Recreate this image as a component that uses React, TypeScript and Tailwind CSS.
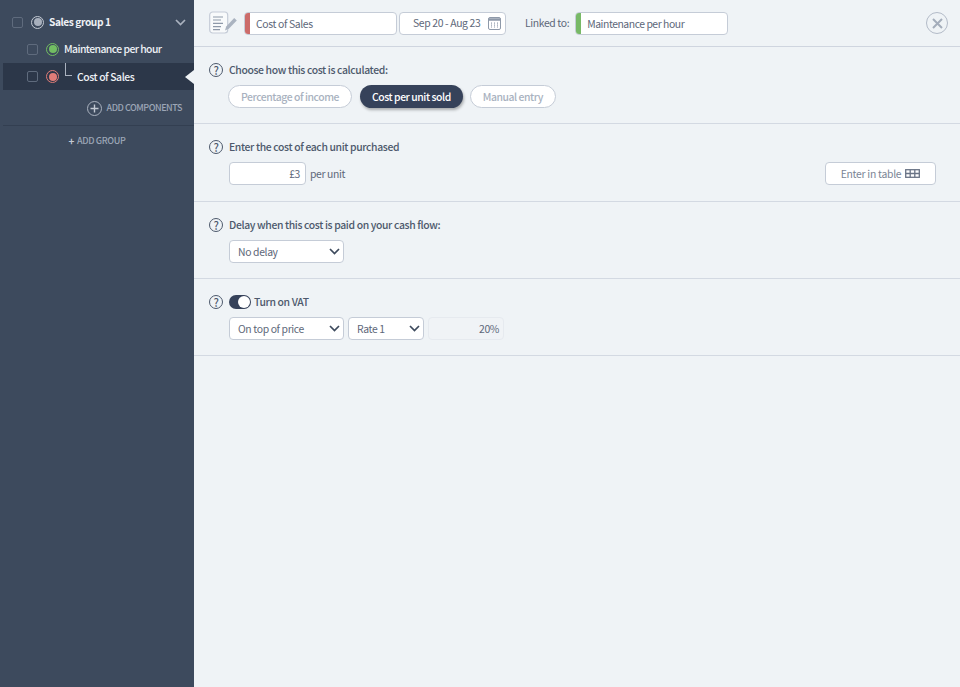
import React from "react";

const font = { fontFamily: '"Noto Sans CJK JP", "Noto Sans", sans-serif' };

function Q() {
  return (
    <span className="flex h-[14px] w-[14px] shrink-0 items-center justify-center rounded-full border-[1.5px] border-[#4d596c] text-[11px] font-medium leading-none text-[#4d596c]">?</span>
  );
}

function Chevron({ className = "" }: { className?: string }) {
  return (
    <svg width="11" height="7" viewBox="0 0 11 7" className={className} fill="none" stroke="currentColor" strokeWidth="1.7">
      <path d="M1 1l4.5 4.5L10 1" />
    </svg>
  );
}

function Select({ label, w }: { label: string; w: string }) {
  return (
    <div className={`flex h-[23px] items-center justify-between rounded-[4px] border border-[#c5ccd7] bg-white pl-2 pr-[3px] text-[10.4px] text-[#5d6779] ${w}`}>
      <span>{label}</span>
      <Chevron className="text-[#3d4a5d]" />
    </div>
  );
}

function Dot({ outer, inner }: { outer: string; inner: string }) {
  return (
    <span className={`flex h-[13px] w-[13px] shrink-0 items-center justify-center rounded-full border-[1.5px] ${outer}`}>
      <span className={`h-[8px] w-[8px] rounded-full ${inner}`} />
    </span>
  );
}

function Box() {
  return <span className="h-[11px] w-[11px] shrink-0 rounded-[2px] border border-[#5f6b7d]" />;
}

function Section({ h, children }: { h: string; children: React.ReactNode }) {
  return <section className={`border-b border-[#d3d9e2] pl-[15px] ${h}`}>{children}</section>;
}

function Label({ children, className = "" }: { children: React.ReactNode; className?: string }) {
  return (
    <div className={`flex h-[14px] items-center gap-[6px] text-[10.4px] font-medium text-[#4d596c] ${className}`}>
      <Q />
      <span>{children}</span>
    </div>
  );
}

function Pill({ children, active }: { children: React.ReactNode; active?: boolean }) {
  return active ? (
    <span className="flex h-[23px] items-center rounded-full bg-[#36425a] px-[12px] text-[10.4px] font-medium tracking-[-0.44px] text-white shadow-[1px_2px_3px_rgba(0,0,0,0.3)]">{children}</span>
  ) : (
    <span className="flex h-[23px] items-center rounded-full border border-[#c5ccd7] bg-white px-[12px] text-[10.4px] font-medium tracking-[-0.44px] text-[#a9b2c0]">{children}</span>
  );
}

export default function App() {
  return (
    <div className="flex h-[687px] w-[960px] overflow-hidden bg-[#eff3f6] tracking-[-0.36px]" style={font}>
      <aside className="flex h-full w-[194px] shrink-0 flex-col bg-[#3d4a5d] pl-[3px] text-white">
        <div className="flex h-[40px] items-center pl-[9px] pr-[8px] pt-[4px]">
          <Box />
          <span className="ml-[8px]"><Dot outer="border-[#c3c9d3]" inner="bg-[#a8b0bd]" /></span>
          <span className="ml-[5px] text-[10.2px] font-bold tracking-[-0.42px] text-[#eef1f5]">Sales group 1</span>
          <Chevron className="ml-auto text-[#aab2bf]" />
        </div>
        <div className="flex h-[23px] items-center pb-[5px] pl-[24px]">
          <Box />
          <span className="ml-[8px]"><Dot outer="border-[#72bd62]" inner="bg-[#72bd62]" /></span>
          <span className="ml-[5px] text-[10.4px] font-medium tracking-[-0.56px] text-[#eef1f5]">Maintenance per hour</span>
        </div>
        <div className="relative flex h-[27px] items-center bg-[#2c3749] pl-[24px]">
          <Box />
          <span className="ml-[8px]"><Dot outer="border-[#e07c78]" inner="bg-[#e07c78]" /></span>
          <span className="relative ml-[18px] text-[10.4px] font-medium tracking-[-0.42px] text-[#eef1f5]">
            Cost of Sales
          </span>
          <span className="absolute left-[62px] top-0 h-[13px] w-[7px] border-b border-l border-[#aab2bf]" />
          <span className="absolute right-0 top-[7px] h-0 w-0 border-y-[7px] border-r-[9px] border-y-transparent border-r-[#eff3f6]" />
        </div>
        <div className="flex h-[36px] items-center justify-end border-b border-[#333f51] pr-[12px] pt-[1px]">
          <span className="flex h-[15px] w-[15px] items-center justify-center rounded-full border border-[#aab2bf] text-[#c2c8d2]">
            <svg width="9" height="9" viewBox="0 0 9 9" stroke="currentColor" strokeWidth="1.4"><path d="M4.5 0.5v8M0.5 4.5h8" /></svg>
          </span>
          <span className="ml-[4px] text-[9px] font-medium tracking-[-0.45px] text-[#9ca6b6]">ADD COMPONENTS</span>
        </div>
        <div className="flex h-[30px] items-center justify-center pr-[3px] text-[9px] font-medium text-[#9ca6b6]">
          <span className="mr-[3px] text-[10px] font-bold leading-none text-[#c2c8d2]">+</span>ADD GROUP
        </div>
      </aside>

      <main className="flex min-w-0 flex-1 flex-col">
        <header className="flex h-[47px] items-center border-b border-[#cfd5df] pl-[15px] pr-[12px]">
          <svg width="29" height="24" viewBox="0 0 29 24" fill="none" className="shrink-0">
            <rect x="0.7" y="1" width="18" height="21" rx="3" fill="#f8fafb" stroke="#c5ccd7" strokeWidth="1.2" />
            <path d="M4 6h10M4 9h8M4 12.3h10M4 15.7h8M4 18.6h7" stroke="#8e99a9" strokeWidth="1.2" />
            <path d="M16 19.5l1.2-4 8-8.5 2.6 2.5-8 8.2z" fill="#aab3c0" />
          </svg>
          <div className="ml-[6px] flex h-[23px] w-[153px] overflow-hidden rounded-[4px] border border-[#c5ccd7] bg-white">
            <span className="w-[5px] shrink-0 bg-[#cc6c6a]" />
            <span className="pl-[6px] text-[10.4px] leading-[21px] text-[#5d6779]">Cost of Sales</span>
          </div>
          <div className="ml-[2px] flex h-[23px] w-[107px] items-center justify-between rounded-[4px] border border-[#c5ccd7] bg-white pl-[13px] pr-[4px] text-[10.4px] text-[#5d6779]">
            <span>Sep 20 - Aug 23</span>
            <svg width="13" height="13" viewBox="0 0 13 13" fill="none" stroke="#8e99a9">
              <rect x="0.5" y="0.5" width="12" height="12" rx="1.5" />
              <path d="M0.5 2.5h12" strokeWidth="2.5" />
              <path d="M3.5 5.5v5M6.5 5.5v5M9.5 5.5v5" strokeDasharray="1.2 0.8" />
            </svg>
          </div>
          <span className="ml-[19px] text-[10.4px] text-[#5d6779]">Linked to:</span>
          <div className="ml-[6px] flex h-[23px] w-[153px] overflow-hidden rounded-[4px] border border-[#c5ccd7] bg-white">
            <span className="w-[5px] shrink-0 bg-[#78b967]" />
            <span className="pl-[6px] text-[10.4px] leading-[21px] tracking-[-0.46px] text-[#5d6779]">Maintenance per hour</span>
          </div>
          <span className="ml-auto flex h-[22px] w-[22px] items-center justify-center rounded-full border-[1.5px] border-[#b3bbc8] text-[#a4adbb]">
            <svg width="11" height="11" viewBox="0 0 11 11" stroke="currentColor" strokeWidth="2"><path d="M1 1l9 9M10 1l-9 9" /></svg>
          </span>
        </header>

        <Section h="h-[77px] pt-[16px]">
          <Label>Choose how this cost is calculated:</Label>
          <div className="ml-[19px] mt-[8px] flex gap-[8px]">
            <Pill>Percentage of income</Pill>
            <Pill active>Cost per unit sold</Pill>
            <span className="-ml-[1px]"><Pill>Manual entry</Pill></span>
          </div>
        </Section>

        <Section h="h-[78px] pt-[16px]">
          <Label>Enter the cost of each unit purchased</Label>
          <div className="ml-[20px] mt-[8px] flex items-center pr-[24px]">
            <div className="flex h-[23px] w-[77px] items-center justify-end rounded-[4px] border border-[#c5ccd7] bg-white pr-[5px] text-[10.4px] text-[#5d6779]">£3</div>
            <span className="ml-[4px] text-[10.4px] text-[#5d6779]">per unit</span>
            <div className="ml-auto flex h-[23px] w-[111px] items-center justify-center gap-[4px] rounded-[4px] border border-[#c5ccd7] bg-white text-[10.4px] tracking-[-0.28px] text-[#7b8595]">
              <span>Enter in table</span>
              <svg width="15" height="9" viewBox="0 0 15 9" fill="none" stroke="#6a7486" strokeWidth="1.3">
                <rect x="0.7" y="0.7" width="13.6" height="7.6" />
                <path d="M0.7 4.5h13.6M5.2 0.7v7.6M9.8 0.7v7.6" />
              </svg>
            </div>
          </div>
        </Section>

        <Section h="h-[77px] pt-[16px]">
          <Label>Delay when this cost is paid on your cash flow:</Label>
          <div className="ml-[20px] mt-[8px] flex">
            <Select label="No delay" w="w-[115px]" />
          </div>
        </Section>

        <Section h="h-[77px] pt-[16px]">
          <div className="flex h-[14px] items-center text-[10.4px] font-medium text-[#4d596c]">
            <Q />
            <span className="ml-[6px] flex h-[14px] w-[22px] items-center justify-end rounded-full bg-[#36425a] pr-[1px]">
              <span className="h-[12px] w-[12px] rounded-full bg-white" />
            </span>
            <span className="ml-[3px]">Turn on VAT</span>
          </div>
          <div className="ml-[20px] mt-[8px] flex gap-[4px]">
            <Select label="On top of price" w="w-[115px]" />
            <Select label="Rate 1" w="w-[76px]" />
            <div className="flex h-[23px] w-[76px] items-center justify-end rounded-[4px] border border-[#e6eaef] bg-[#f0f3f6] pr-[4px] text-[10.4px] text-[#5d6779]">20%</div>
          </div>
        </Section>
      </main>
    </div>
  );
}
